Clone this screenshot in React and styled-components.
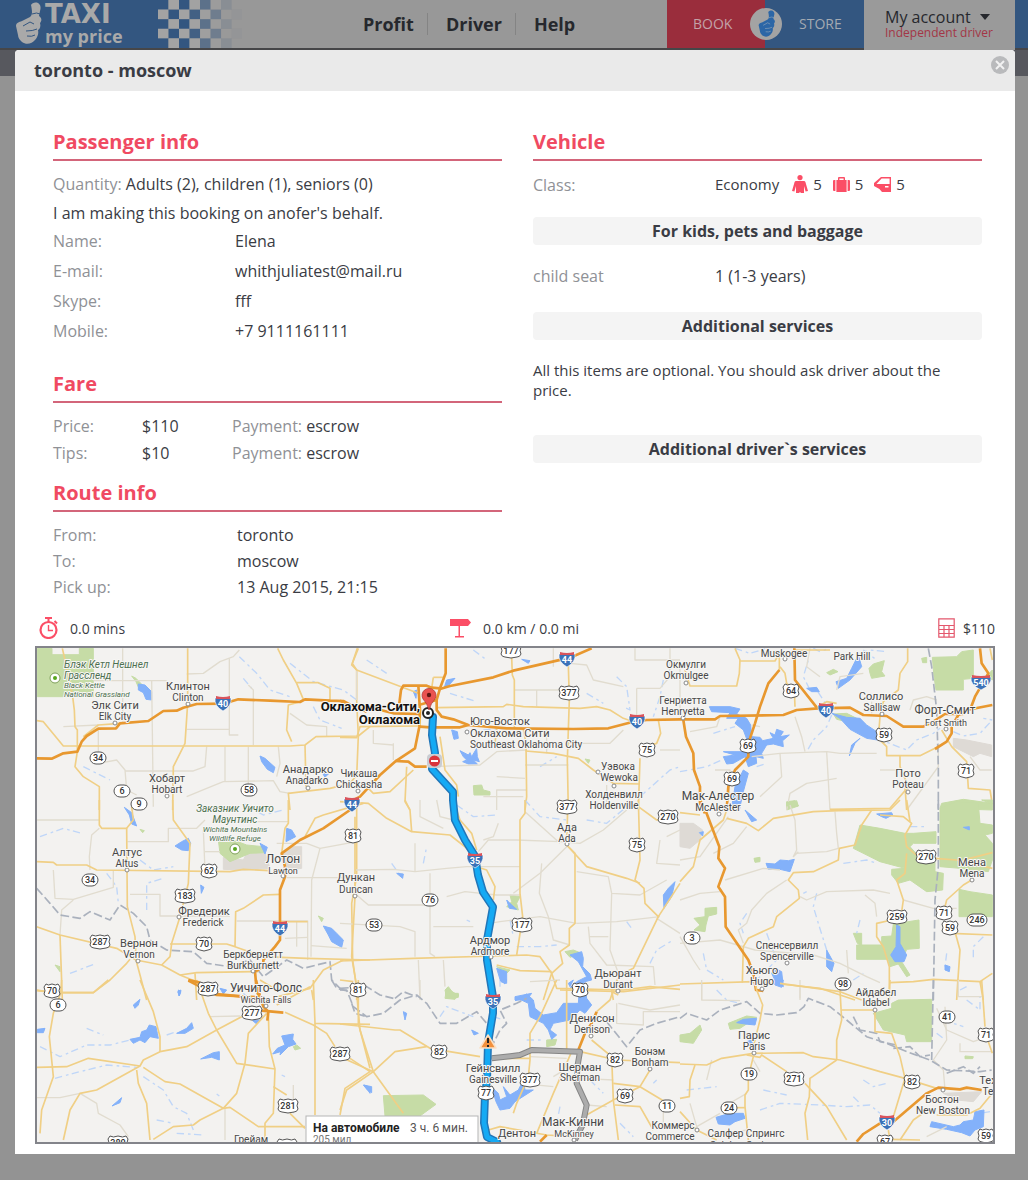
import React from "react";
import styled, { createGlobalStyle } from "styled-components";

const GlobalStyle = createGlobalStyle`
  *, *::before, *::after { box-sizing: border-box; }
  body {
    margin: 0;
    background: #939393;
    color: #3a3c44;
    font-family: "Open Sans", "Noto Sans", sans-serif;
    font-size: 16px;
  }
  h1, h2, h3, p, dl, dd, ul { margin: 0; padding: 0; }
`;

const Page = styled.div`
  min-height: 100vh;
  padding-bottom: 26px;
`;

/* ---------- site header ---------- */

const Header = styled.header`
  display: flex;
  height: 50px;
  background: #989898;
  border-bottom: 2px solid #464648;
`;

const Logo = styled.a`
  display: flex;
  flex: none;
  width: 158px;
  padding-left: 15px;
  gap: 3px;
  background: #335680;
  color: #a9a9a9;
  text-decoration: none;
`;

const LogoText = styled.span`
  display: flex;
  flex-direction: column;
`;

const LogoTop = styled.span`
  font-family: "DejaVu Sans", sans-serif;
  font-weight: 700;
  font-size: 26px;
  line-height: 28px;
`;

const LogoBottom = styled.span`
  font-weight: 700;
  font-size: 18px;
  line-height: 16px;
`;

const Checker = styled.svg`
  flex: none;
  width: 84px;
  height: 48px;
`;

const Nav = styled.nav`
  flex: 1;
  display: flex;
  align-items: center;
  padding-left: 103px;
`;

const NavLink = styled.a`
  padding: 0 13px 0 18px;
  border-right: ${(p) => (p.$last ? "none" : "1px solid #848484")};
  color: #26282d;
  font-size: 18px;
  font-weight: 700;
  line-height: 22px;
  text-decoration: none;
`;

const Switch = styled.div`
  position: relative;
  display: grid;
  grid-template-columns: 98px 99px;
  width: 197px;
`;

const SwitchLink = styled.a`
  padding: ${(p) => (p.$right ? "0 0 0 34px" : "0 0 0 26px")};
  background: ${(p) => (p.$right ? "#335680" : "#9a2d3c")};
  color: ${(p) => (p.$right ? "#a4aab2" : "#c3a2a8")};
  font-size: 14px;
  line-height: 48px;
  text-decoration: none;
`;

const SwitchBadge = styled.svg`
  position: absolute;
  left: 50%;
  top: 50%;
  width: 32px;
  height: 32px;
  margin: -16px;
`;

const Account = styled.button`
  display: flex;
  flex-direction: column;
  align-items: flex-start;
  width: 151px;
  height: 50px;
  padding: 7px 0 0 21px;
  border: 0;
  background: #9a9a9a;
  color: #26282d;
  font-family: inherit;
  text-align: left;
`;

const AccountName = styled.span`
  display: flex;
  align-items: center;
  gap: 9px;
  font-size: 16px;
  line-height: 20px;
`;

const AccountRole = styled.span`
  color: #a33646;
  font-size: 12px;
  line-height: 12px;
`;

const Caret = styled.span`
  border: 5px solid transparent;
  border-top: 6px solid #26282d;
  border-bottom: 0;
`;

const HeaderTail = styled.div`
  width: 13px;
  background: #335680;
`;

const Band = styled.div`
  height: 26px;
  background: #57585e;
`;

/* ---------- dialog ---------- */

const Dialog = styled.main`
  margin: -26px 13px 0 15px;
  padding-bottom: 10px;
  border-radius: 4px 4px 0 0;
  background: #fff;
`;

const DialogBar = styled.div`
  display: flex;
  justify-content: space-between;
  align-items: flex-start;
  height: 41px;
  padding: 6px 6px 0 19px;
  border-radius: 4px 4px 0 0;
  background: #eaeaea;
`;

const DialogTitle = styled.h1`
  font-size: 18px;
  line-height: 28px;
`;

const CloseButton = styled.button`
  display: block;
  width: 18px;
  height: 18px;
  padding: 0;
  border: 0;
  background: none;
`;

const Columns = styled.div`
  display: grid;
  grid-template-columns: 1fr 1fr;
  gap: 31px;
  padding: 38px 33px 12px 38px;
`;

const Section = styled.section`
  margin-bottom: ${(p) => p.$after || 0}px;
`;

const SectionTitle = styled.h2`
  padding-bottom: 4px;
  border-bottom: 2px solid #d3657a;
  color: #f04a62;
  font-size: 20px;
  line-height: 26px;
`;

const Rows = styled.dl`
  padding-top: ${(p) => p.$top || 0}px;
`;

const Row = styled.div`
  display: grid;
  grid-template-columns: ${(p) => p.$cols || "182px 1fr"};
  align-items: center;
  line-height: ${(p) => p.$height || 30}px;
`;

const Term = styled.dt`
  color: #8f9196;
`;

const InlineTerm = styled.span`
  color: #8f9196;
`;

const Quantity = styled.p`
  padding-top: 8px;
  line-height: 31px;
`;

const Note = styled.p`
  line-height: 26px;
`;

const Pill = styled.h3`
  margin: ${(p) => p.$top}px 0 ${(p) => p.$bottom || 0}px;
  border-radius: 4px;
  background: #f4f4f4;
  font-size: 16px;
  line-height: 28px;
  text-align: center;
`;

const Hint = styled.p`
  font-size: 15px;
  line-height: 20px;
`;

const Capacity = styled.dd`
  display: flex;
  align-items: center;
  font-size: 15px;
  line-height: 28px;
  padding-bottom: 2px;
`;

const CapacityItem = styled.span`
  display: flex;
  align-items: center;
  gap: 5px;
  margin-left: ${(p) => (p.$first ? 13 : 11)}px;
`;

const Stats = styled.div`
  display: grid;
  grid-template-columns: 43% auto 1fr;
  align-items: center;
  height: 34px;
  padding: 0 20px 2px 24px;
`;

const Stat = styled.div`
  display: flex;
  align-items: center;
  justify-self: ${(p) => (p.$end ? "end" : "start")};
  gap: ${(p) => (p.$end ? 8 : 12)}px;
  font-size: 14px;
`;

const MapFrame = styled.figure`
  margin: 0 20px;
  border: 2px solid #83848a;
  line-height: 0;
`;

const MapCanvas = styled.svg`
  display: block;
  width: 100%;
  height: auto;
  font-family: Roboto, sans-serif;
`;

/* ---------- icons ---------- */

const RED = "#fb4e66";

function Hand({ fill, line }) {
  return (
    <g>
      <path
        fill={fill}
        d="M16 3C17 1 20 0 23 1C26 3 26 6 25 9L24 14C27 16 27 19 25 21C26 24 25 27 23 28C24 32 22 36 20 38C17 42 11 43 7 40C5 38 3 36 3 33L1 24C1 21 4 20 7 19L15 15C18 13 17 8 16 3Z"
      />
      <path fill="none" stroke={line} strokeWidth="1" d="M8 24L15 20L19 22M11 29Q18 29 22 27M12 34Q17 35 20 33M17 12Q22 10 25 12" />
    </g>
  );
}

function ThumbIcon() {
  return (
    <svg width="27" height="46" viewBox="0 -2 27 46" aria-hidden="true">
      <Hand fill="#a9a9a9" line="#335680" />
    </svg>
  );
}

function PersonIcon() {
  return (
    <svg width="16" height="18" viewBox="0 0 16 18" fill={RED} aria-hidden="true">
      <circle cx="8" cy="2.6" r="2.6" />
      <path d="M4 6H12Q13 6 13.4 7L16 16L13.6 16.6L12 11V18H8.5V17H7.5V18H4V11L2.4 16.6L0 16L2.6 7Q3 6 4 6Z" />
    </svg>
  );
}

function CaseIcon() {
  return (
    <svg width="17" height="15" viewBox="0 0 17 15" fill={RED} aria-hidden="true">
      <path d="M1 3H2.4V14H1Q0 14 0 13V4Q0 3 1 3ZM3.4 3H5V1Q5 0 6 0H11Q12 0 12 1V3H13.6V15H3.4ZM6.4 3H10.6V1.4H6.4ZM14.6 3H16Q17 3 17 4V13Q17 14 16 14H14.6Z" />
    </svg>
  );
}

function DoorIcon() {
  return (
    <svg width="17" height="15" viewBox="0 0 17 15" aria-hidden="true">
      <path fill={RED} d="M0 6L7 0H17V15H8Q5 11 0 9ZM2.5 7H15.6V1.4H7.6ZM11 9V10.4H14.5V9Z" fillRule="evenodd" />
    </svg>
  );
}

function TimerIcon() {
  return (
    <svg width="19" height="22" viewBox="0 0 19 22" fill="none" stroke={RED} aria-hidden="true">
      <circle cx="9.5" cy="13" r="8" strokeWidth="2.2" />
      <path strokeWidth="2" d="M6 1H13M9.5 1V5M15.5 4L18 6.5" />
      <path strokeWidth="1.4" d="M9.5 8V13.5H14" />
    </svg>
  );
}

function SignIcon() {
  return (
    <svg width="21" height="20" viewBox="0 0 21 20" fill={RED} aria-hidden="true">
      <path d="M0 1H18L21 4.500L18 8H10V18H14V19.500H5V18H8.500V8H0Z" />
    </svg>
  );
}

function CalcIcon() {
  return (
    <svg width="17" height="20" viewBox="0 0 17 20" fill="none" stroke="#e4576c" aria-hidden="true">
      <path d="M.8 .8H16.2V19.2H.8ZM.8 7.5H16.2M.8 11.5H16.2M.8 15.5H16.2M6 7.5V19M11 7.5V19" strokeWidth="1.2" />
    </svg>
  );
}

/* ---------- map data: tiles are drawn at three units per pixel ---------- */

const TILES = [
  {
    x: 30, y: 610,
    green: ["22,115 66,115 66,134 148,134 148,115 190,115 190,260 22,260", "305,198 318,205 340,228 328,238 318,215"],
    water: ["325,222 345,225 365,245 365,270 348,268 340,248 325,240", "690,438 705,445 735,472 730,488 712,478 695,455", "875,485 895,492 885,502"],
    major: ["20,445 65,446 100,430 142,425 155,395 170,378 205,356 258,355 270,340 355,333 400,303 440,302 460,293 500,282 580,281 625,268 720,272 810,276 825,268 900,272 940,273 955,281 1010,305"],
    minor: ["97,115 105,150 128,260 133,300 135,350 142,360 142,425", "20,332 40,335 100,408 780,408 825,405 858,380 985,378 1020,350", "142,425 135,470 160,500 208,530 208,600", "473,115 473,280 465,400 430,470 428,600", "743,115 760,150 800,220 820,268 808,276 775,285 770,360 785,395", "825,405 828,530", "800,218 865,218 900,235 900,272", "985,115 965,165 980,180 980,270 985,378 980,500", "780,600 775,550 900,535 960,520 985,490", "160,380 205,345 270,340"],
    faint: ["278,115 278,335", "470,192 520,190 570,155 610,140 628,120", "365,212 370,590", "598,145 598,375 625,375", "190,212 410,212", "655,225 670,240 670,405", "205,360 205,460 260,450 285,480 290,540 320,555", "285,483 490,483 525,470 530,410", "470,560 530,535 580,515 730,512 750,545 780,550", "585,410 585,515", "740,500 750,460 745,410", "780,310 830,345 890,350 890,380", "655,410 655,540", "470,358 598,358", "100,350 205,345"],
    creek: ["628,140 680,190 720,240 780,260", "780,160 850,215 940,240 980,270", "850,290 870,330 935,355", "160,470 240,510", "640,205 665,235"],
  },
  {
    x: 340, y: 610,
    green: ["400,527 425,525 430,540 450,545 450,555 402,555", "735,447 750,450 745,460"],
    water: ["360,422 385,435 390,428 395,440 410,415 412,440 418,455 400,450 412,462 385,462 368,455 380,450 370,440", "335,360 352,365 355,385 342,388", "220,245 230,240 228,265", "545,148 570,152 565,160", "320,210 345,205 330,222 312,235"],
    major: ["317,115 317,190 300,235 290,270 290,300 305,320 340,328 385,345 500,355 700,357 805,355 880,335 920,330 1020,328", "755,115 690,143 520,182 460,202 330,228 300,237", "178,280 183,240 190,227 260,227 275,233 300,235", "235,227 240,300 238,350 225,415 165,455 120,495 60,560 20,580", "0,272 40,290 75,288 160,310 240,312", "165,453 205,455 225,470 260,470", "240,350 270,352 360,352 385,345", "236,285 290,270"],
    minor: ["52,115 37,160 50,180 235,250", "515,140 517,195 523,210 523,355 550,357 558,400 560,560 555,600", "290,293 490,290 500,283 550,290 720,295 770,290 810,300 850,325 880,335", "685,165 688,270 682,450 685,600", "557,423 640,430 715,445 760,480 820,520 900,522", "900,445 895,600", "955,330 962,370 950,400 915,410", "0,382 50,383 60,350 240,348", "200,470 195,575 210,600", "300,380 315,480 350,525 355,560", "80,530 100,550 150,545 220,480", "280,202 310,202", "275,235 280,202", "470,357 465,400"],
    faint: ["523,240 680,240", "590,240 590,290", "270,470 420,465 470,425 560,420", "640,170 640,115", "620,360 620,430", "685,400 810,400 850,360", "885,115 885,150 1020,150", "890,235 890,325", "890,235 960,235 990,200 990,115", "470,500 555,505", "555,465 685,465", "800,525 800,600", "430,560 550,560", "50,180 50,270", "160,400 160,450", "100,360 100,400 160,405", "690,160 740,165 760,210 850,230", "560,540 470,540 470,600", "960,420 1020,420"],
    creek: ["80,150 140,190", "330,250 410,275", "830,200 860,230 870,300 850,290", "970,210 960,260 940,320", "430,360 500,355", "900,560 990,480 1020,470", "740,250 790,280", "600,470 650,440", "400,120 440,150"],
  },
  {
    x: 680, y: 610,
    green: ["757,142 830,140 845,125 880,120 880,205 850,208 850,240 768,240 762,200", "567,175 580,162 613,152 605,185 615,198 575,205 570,190", "440,188 460,178 474,185 450,195", "725,145 740,142 740,158 728,158", "780,595 785,580 850,568 937,580 937,600", "460,312 500,310 530,325 500,335 470,328", "320,575 345,572 355,588 320,600", "918,200 937,180 937,210"],
    water: ["455,310 500,322 540,325 560,345 590,365 592,390 560,385 510,358 480,325", "540,385 525,400 508,438 515,405", "88,290 150,290 180,297 170,312 200,325 212,345 215,380 240,382 248,392 280,385 270,368 285,375 290,358 310,365 300,380 328,375 308,392 310,410 280,402 260,405 245,430 250,445 228,440 230,460 205,470 195,440 160,460 140,462 130,440 165,435 130,425 165,425 195,425 205,400 190,360 165,340 175,325 140,325 150,308 95,305", "468,215 500,205 515,175 535,135 545,170 510,210 475,235", "155,590 165,530 190,480 205,490 190,545 178,600", "380,235 410,232 418,245 395,245"],
    patch: ["820,385 860,390 935,405 935,440 900,430 880,440 820,410"],
    major: ["343,115 345,210 410,292", "0,328 105,328 120,318 310,315 350,300 415,295 510,293 550,315 620,318 670,350 730,350 760,335 795,312 850,312", "937,285 860,300 835,315 815,350 815,370 800,395 765,417", "900,115 905,160 925,190 885,260 870,300", "298,180 265,220 240,290 225,340 205,400 205,440 165,480 145,530 140,600", "10,330 18,380 40,430 42,480 60,530 60,580 75,610"],
    minor: ["165,115 180,150 178,190 170,228 30,228 15,180", "178,153 285,153 298,130 298,185", "300,170 315,190 320,220 343,240 345,290", "345,120 450,120", "683,115 683,155 660,190 655,240 610,275 600,320 595,385 620,410 620,437 720,437 765,415", "660,437 660,470 685,530 630,595 450,598", "675,530 680,600", "785,360 815,410 860,455 865,535 930,540 935,570", "410,292 440,275 470,280", "930,115 937,150"],
    faint: ["345,320 365,380 375,425", "215,440 300,430 440,425 480,430 590,430", "440,425 450,600", "105,480 150,480 145,570", "300,430 305,500 240,560", "0,175 0,300", "120,320 110,350 30,365", "240,350 215,345", "420,200 380,170 390,115", "470,240 480,200 550,190", "575,275 575,310", "690,300 700,270 740,260 770,270", "600,480 650,480", "470,505 380,520 330,550 320,600", "870,440 900,480 935,480", "775,400 775,470 680,600"],
    creek: ["165,115 210,130 260,115", "400,115 420,125 440,118", "360,130 385,150 370,200 390,240 410,240 430,270 455,310", "590,385 680,420 710,390 760,370 780,355", "820,365 850,378 900,370 937,330 910,325", "455,315 440,350 400,390 380,425", "550,120 590,150", "230,470 260,460", "0,485 80,470 125,450", "100,370 165,350", "540,130 570,120 620,125"],
    border: ["745,115 755,170 770,300 775,470 775,600"],
  },
  {
    x: 30, y: 800,
    green: ["565,120 615,122 650,135 700,140 705,158 660,160 600,185 570,160", "330,88 343,92 338,98", "865,348 880,355 875,365", "75,495 90,500 90,515"],
    patch: ["580,172 640,180 650,160 705,158 720,205 640,210 580,208", "755,165 785,140 815,140 815,205 770,210"],
    water: ["435,138 455,125 475,115 482,130 475,152 455,150", "770,85 785,90 797,110 768,125", "283,22 305,38 320,78 305,72 298,45", "880,378 905,385 920,400 940,420 935,442 905,425 895,405", "690,130 712,142 705,162", "512,255 522,262 514,280", "445,570 453,575 447,588"],
    major: ["960,30 880,85 810,120 755,160 765,200 765,230 750,270 750,420 735,440 700,480 700,500 675,515 680,570 690,600", "475,542 560,585 690,592"],
    minor: ["208,0 208,75 215,85 290,85 292,320 315,410 318,480 350,600", "428,0 430,60 480,130 475,250 450,350 425,430 420,470 395,495 318,480 260,445 90,405 20,380", "20,185 70,187 80,195 170,195 200,210 600,215 640,208 720,212", "775,0 775,70 765,85 755,160", "20,572 80,578 190,578 240,540 290,490 300,478", "90,405 97,600", "420,432 590,432 615,440 700,470 830,475 1020,480", "615,440 617,335 640,325 700,285 750,283", "395,495 450,525 500,545", "450,525 500,518 670,515 685,515", "495,520 500,600", "750,365 833,365", "980,0 980,230 965,310 968,480 985,600", "940,480 880,510 840,565 745,590", "690,540 740,570", "845,570 850,600", "825,110 855,55 880,45 1000,10", "290,85 310,60 305,20"],
    faint: ["20,60 208,60", "70,210 75,295 130,298 250,262 250,212", "180,210 178,170 185,105 208,85", "292,125 415,125 415,85 500,85 525,60", "300,283 390,283 390,348 600,348", "620,363 833,363 833,480", "520,90 525,210", "770,233 980,233", "740,130 830,130 870,145 980,125", "870,145 845,240 843,470", "950,445 843,437", "765,415 833,412", "90,405 95,330 130,300", "525,155 570,155", "650,65 775,65", "800,365 800,440"],
    creek: ["30,110 100,85 155,100", "230,220 260,260 265,310", "330,180 370,210 430,200", "350,330 350,250 400,235", "120,520 200,490", "640,10 700,45 760,30"],
    border: ["20,265 60,310 90,345 150,355 180,335 240,360 270,315 310,340 350,380 360,420 410,450 490,455 530,490 600,500 660,480 700,530 770,480 820,505 900,485 905,540 935,570"],
  },
  {
    x: 340, y: 800,
    green: ["510,285 540,290 530,310 535,330 500,320 515,305", "315,570 325,560 340,580 355,580 355,592 320,595", "675,455 700,450 725,460 690,472", "470,500 510,510 500,520"],
    water: ["500,300 515,315 530,328 508,325", "470,505 500,515 500,550 482,545", "690,465 725,455 730,475 728,500 750,522 755,540 735,545 720,560 690,565 710,545 740,530 715,485", "970,285 985,265 1005,245 995,290 972,325", "170,220 190,222 188,235", "525,590 575,580 560,600 525,600"],
    minor: ["0,5 85,10 140,55 215,95 330,105 400,160", "195,0 210,30 215,95", "555,0 555,40 540,60 540,280 548,350 530,465", "0,483 220,475 560,465 600,470 635,520 650,565 850,570 930,560 1020,568", "683,30 680,135 705,160 705,370 688,385 688,435 660,455 668,490 635,520 610,600", "895,0 900,180 885,240 912,265 915,310 955,350 1020,250", "955,350 880,505 840,525 815,570 820,600", "470,495 540,512 635,515", "45,50 45,290 35,470 50,560 50,600", "410,200 440,210 465,260 460,300", "895,20 950,60 985,55", "680,135 740,200 860,235 900,250", "340,0 360,60 395,100 410,150"],
    faint: ["45,210 160,208 225,215 320,205 380,200 540,200", "225,130 225,215", "50,285 85,315 270,315", "270,220 270,460 285,470", "320,290 375,275 470,285 540,285", "415,155 445,120 530,120 660,125 720,130 790,90 860,30", "555,35 660,130", "680,140 600,220 520,280", "605,190 598,280 625,350 640,420 690,435", "710,215 805,230 815,280 900,285 980,240", "815,280 810,450 835,520", "450,370 480,365 600,350 710,370", "710,370 830,365 960,350", "0,370 180,380 225,395 225,470", "280,380 400,380", "745,380 750,430 800,495 940,500 945,555", "310,480 315,560", "950,355 1020,400", "475,70 460,110 430,120", "240,0 240,50 310,85", "290,0 300,50 340,60", "750,410 805,410", "980,110 1020,90", "960,120 950,190 1020,195", "235,480 240,600"],
    creek: ["350,15 400,50 470,45", "555,0 600,50 680,60", "740,60 800,70 860,20 900,10", "155,190 180,225", "250,190 260,140", "530,440 600,440 650,435", "510,360 520,410", "380,360 390,365", "860,365 875,385", "930,490 950,450 1000,420"],
    border: ["0,565 80,560 120,585 160,595", "165,595 190,575 230,590"],
  },
  {
    x: 680, y: 800,
    green: ["780,25 830,5 895,10 900,70 937,75 937,100 915,105 937,130 937,180 925,215 840,205 780,200", "540,75 600,85 675,100 700,100 768,95 768,130 700,130 690,140 708,160 765,185 765,215 790,220 788,270 740,275 690,240 655,250 635,225 635,208 675,205 600,185 520,145", "837,268 870,275 937,285 937,350 837,350", "605,410 635,408 640,372 717,360 718,445 680,448 665,485 690,525 680,530 655,492 630,500 625,478 530,478 530,435 605,435", "75,325 110,322 110,342 85,348 78,375 75,395 42,390 60,375 42,355 75,350", "520,400 545,400 545,438 532,430", "222,175 240,172 240,185 225,187", "320,8 350,2 355,18 320,18", "905,0 937,0 937,12"],
    patch: ["0,70 40,70 68,90 60,120 30,145 0,140"],
    water: ["258,190 285,192 300,180 325,182 343,178 330,215 300,208 265,208", "650,375 660,380 660,430 680,465 672,485 645,485 632,465 648,440", "285,505 305,515 310,560 288,548 275,520", "440,450 462,490 455,515 440,500", "590,42 635,38 638,45 618,55 605,50", "795,495 810,500 808,515 795,510", "850,82 868,80 868,90", "195,30 230,60 215,65", "58,98 70,95 68,108"],
    major: ["60,0 78,35 118,140 115,175 135,205 115,260 135,290 137,380 205,480 220,520 228,570 250,573"],
    minor: ["0,38 60,45", "140,30 130,60 60,120 40,200 0,245", "140,55 200,70 235,92 280,55 400,35 475,32 630,30 660,0", "575,30 545,75 525,135 478,145 475,180 400,215 340,218 325,240 355,270 358,295 290,350 280,380 205,415 190,440 187,548", "600,45 670,50 695,70 675,105 680,140 708,165", "680,0 690,65", "680,160 675,220 650,240 670,300 665,335", "765,175 830,180 937,205", "875,240 850,255 800,300 795,320", "635,360 590,370 590,410 610,440 628,500 628,600", "815,400 937,405", "825,395 840,450 833,550 830,600", "0,552 220,545 330,555 420,565 525,600", "628,548 700,545 760,538 900,545 937,520", "900,545 910,600", "850,180 937,158"],
    faint: ["0,430 120,420 225,450 400,465", "0,300 60,280 120,275", "345,60 350,150 340,170 355,155", "345,160 440,155 475,145", "320,240 260,280 215,330 200,370 175,390 190,430", "360,290 380,300 440,275 580,270 630,280", "555,285 585,310 590,350", "670,300 760,325 830,325", "400,465 480,490 560,530 600,548", "500,450 505,520", "465,35 470,100 475,145", "65,550 65,600", "360,560 360,600", "145,50 60,170 0,180", "135,240 250,205 300,210", "0,410 40,480 60,510", "330,15 345,60", "100,160 160,130 200,80"],
    creek: ["200,340 180,370 190,400", "260,400 290,480 230,540", "410,280 400,320 415,370 440,450", "490,190 560,180 590,190", "70,460 80,510 130,540", "540,360 530,400", "690,80 740,80", "910,410 880,440 880,480", "840,570 860,560", "800,460 795,500", "520,540 550,520", "370,280 380,275", "205,0 170,-10"],
    border: ["775,0 775,200 765,300 760,600"],
  },
  {
    x: 30, y: 980,
    green: ["790,200 800,195 812,205 795,210"],
    water: ["300,178 330,172 335,155 350,150 358,135 378,140 382,160 385,175 360,170 345,188 330,180 310,190", "440,160 470,145 485,128 490,145 465,160", "512,237 550,218 568,215 568,240 545,232", "755,168 790,162 788,178 798,192 775,200 750,225 752,215 728,222 742,205 765,195", "246,378 275,353 270,368", "310,75 330,58 325,75 315,85", "443,35 453,30 448,48", "22,148 45,145 40,158 22,158", "1003,315 1020,322 1020,340", "570,25 590,30 580,42", "668,122 690,120 680,132"],
    major: ["475,0 510,8", "560,42 640,50", "678,0 690,50 700,80 715,95 712,122", "695,92 760,98"],
    minor: ["20,30 50,35", "60,38 190,38 235,0", "95,0 92,40 70,100 58,170 70,290 35,390 30,460", "330,0 370,95 390,170 390,215", "20,262 110,260 175,235 330,258 340,240 390,215 470,200 560,150 635,110", "330,258 200,330 150,340 120,390 100,480", "320,270 325,310 350,370 360,480", "340,262 405,305 450,312 580,385 600,382 685,440 825,440", "500,0 535,100 560,150 620,250 735,267", "370,478 430,440 490,435 510,420 580,385 620,340 645,250 655,160 710,100", "715,100 718,200 735,267 730,400 705,430 705,480", "730,320 770,345", "780,400 825,445", "850,0 855,130 1020,133", "855,130 855,405", "765,97 850,135 890,160 915,200", "960,235 1020,275 945,325 930,405", "740,75 840,20", "985,0 985,130 1020,265"],
    faint: ["20,353 90,353 150,340 200,370 205,400 270,435 295,470", "540,110 630,108", "585,385 585,480", "790,315 790,400"],
    creek: ["30,200 90,230 170,195 240,195 300,180", "75,295 130,280 230,255 320,262", "340,290 400,330 430,380 470,400 490,450", "170,145 220,165", "410,165 440,155", "640,40 660,60", "755,285 765,290", "560,342 568,348", "440,460 520,465", "380,420 430,430"],
    border: ["905,0 920,25 960,35", "965,70 975,100 1010,110"],
  },
  {
    x: 340, y: 980,
    green: ["130,347 250,345 288,373 240,408 135,408", "320,25 345,40 357,45 345,58 315,55", "620,180 650,178 645,195 620,200"],
    water: ["525,62 560,42 580,60 585,85 610,105 650,98 670,70 715,70 718,30 735,25 740,55 755,75 735,100 720,90 690,120 640,130 630,150 650,165 635,178 625,150 610,130 570,110 565,70 540,58", "455,322 475,340 480,360 500,350 490,320 510,345 535,330 550,300 555,330 580,330 525,365 510,385 480,390 468,365", "190,95 200,100 195,120", "395,150 415,160 402,165", "70,315 95,320 95,338 82,330", "480,0 500,0 495,12", "685,10 700,0 690,20"],
    major: ["770,95 755,130 735,160 715,210", "620,465 600,485"],
    minor: ["0,132 165,150 180,150 270,205 420,230", "50,40 60,150 100,275 190,400", "0,230 100,275 165,215 260,200", "0,390 20,330 100,275", "650,0 600,110 570,160 570,240 565,290 530,370 520,400", "680,0 680,210", "0,0 40,5", "720,215 830,240 1020,248", "815,35 835,45", "820,30 810,60 770,95", "755,180 815,230 820,360 835,480", "695,215 640,340 590,460", "730,410 820,360 900,320 930,270", "820,310 900,320 1000,380", "825,375 900,380 940,450", "445,450 480,440 620,465 700,470", "660,30 850,35 1020,15", "570,235 440,235"],
    faint: ["240,0 240,55", "570,230 680,235", "830,70 830,130 910,135 910,95 1020,95", "640,290 690,260", "740,375 800,380", "720,295 820,300", "640,320 540,310", "0,420 0,480", "570,5 660,0", "970,380 970,440", "835,70 930,90 1020,75"],
    creek: ["480,0 480,20", "300,110 320,80 400,110", "460,110 490,120", "840,430 880,470", "660,380 650,430", "750,300 790,340", "560,180 610,180", "940,310 950,300"],
    border: ["0,30 20,30 40,80 80,110 130,100 180,60 230,45 260,70 300,130 350,130 410,95 440,130 460,190 480,150 500,130 480,90 530,70 560,55", "800,125 860,200 900,150 950,130 1020,110"],
    detour: ["455,235 540,225 575,210 720,215 712,260 710,310 740,375 728,435 705,480"],
  },
  {
    x: 680, y: 980,
    green: ["580,100 635,85 635,70 655,60 755,58 755,185 680,185 675,165 610,150", "145,130 170,120 200,108 230,112 180,145 150,148", "0,165 30,160 60,135 65,150 40,190 0,185", "855,228 880,230 878,236 855,236"],
    patch: ["790,340 905,335 880,365 830,360"],
    water: ["170,128 190,118 230,115 225,135 195,132", "108,412 150,400 190,400 195,415 165,425 150,435 115,432", "850,425 880,420 885,395 912,390 910,440 885,450 870,468 845,458 800,448 750,440 755,425 820,440 840,435", "280,0 310,0 305,22 285,15", "200,185 215,180 218,195"],
    major: ["530,485 550,462 600,430 640,425 740,340 775,323 840,328 860,323 905,330"],
    minor: ["0,252 80,255 125,235 220,220 370,218 400,230 480,240 600,275 675,295 770,325", "220,230 205,290 205,330 195,345 195,380 205,480", "200,225 240,232 245,225 320,275", "375,310 440,380 500,480", "470,240 390,295 388,350 375,400 383,480", "470,240 470,180 485,120 480,30", "225,0 230,30 248,75 240,120 220,200", "300,10 480,35 545,60", "485,90 580,90", "585,95 585,155 635,160 660,230 675,295 640,410", "170,383 195,383", "45,255 30,300 28,350 0,355", "905,0 915,140", "925,185 937,220", "660,480 700,420 750,385", "625,450 630,480", "0,395 50,450 110,480", "937,340 900,385 860,405 770,405", "630,0 628,40", "635,478 720,480"],
    faint: ["65,0 65,60 180,62", "360,0 360,55", "80,300 95,240", "30,370 50,440 120,400", "140,375 200,340", "795,80 800,180 760,240 790,270 795,330", "835,0 835,50 910,50", "770,85 800,150 880,185 937,165", "240,275 220,240", "120,460 205,450", "840,190 840,215 937,215", "800,440 740,470"],
    creek: ["240,390 300,370 420,375 500,380 570,375 600,400", "550,300 580,320 620,310", "20,330 110,320", "250,330 320,345", "520,350 540,370", "110,30 140,60 180,70", "860,60 900,90 900,50", "930,395 900,400", "770,160 790,175", "790,120 850,140"],
    border: ["0,115 20,100 80,120 120,90 200,65 240,100 290,105 350,98 372,80 385,55 450,80 500,120 560,170 620,190 680,215 750,240 800,270 900,275 935,270", "520,110 540,150 590,160 600,185 650,195", "640,205 690,200 720,230 750,225", "800,280 850,260 880,280 900,260", "760,0 755,240"],
  },
];

// x, y, text, size
const PLACES = [
  [188, 690, "Клинтон", 11], [188, 701, "Clinton", 10], [115, 709, "Элк Сити", 11], [115, 720, "Elk City", 10],
  [167, 782, "Хобарт", 11], [167, 793, "Hobart", 10], [308, 773, "Анадарко", 11], [307, 784, "Anadarko", 10],
  [359, 777, "Чикаша", 10], [359, 788, "Chickasha", 10], [686, 668, "Окмулги", 10], [686, 679, "Okmulgee", 10],
  [784, 657, "Muskogee", 10], [852, 660, "Park Hill", 10], [683, 704, "Генриетта", 10], [683, 715, "Henryetta", 10],
  [881, 700, "Соллисо", 11], [882, 711, "Sallisaw", 10], [945, 714, "Форт-Смит", 12], [946, 726, "Fort Smith", 9],
  [618, 770, "Уэвока", 10], [619, 781, "Wewoka", 10], [614, 798, "Холденвилл", 10], [614, 809, "Holdenville", 10],
  [718, 800, "Мак-Алестер", 12], [718, 811, "McAlester", 10], [908, 777, "Пото", 11], [908, 788, "Poteau", 10],
  [127, 856, "Алтус", 11], [127, 867, "Altus", 10], [283, 863, "Лотон", 12], [283, 874, "Lawton", 9],
  [204, 915, "Фредерик", 11], [203, 926, "Frederick", 10], [139, 947, "Вернон", 11], [139, 958, "Vernon", 10],
  [253, 958, "Беркбернетт", 10], [253, 969, "Burkburnett", 10], [266, 992, "Уичито-Фолс", 12], [266, 1003, "Wichita Falls", 9],
  [356, 881, "Дункан", 11], [356, 893, "Duncan", 10], [567, 831, "Ада", 11], [567, 842, "Ada", 10],
  [490, 944, "Ардмор", 11], [490, 955, "Ardmore", 10], [618, 977, "Дьюрант", 11], [618, 988, "Durant", 10],
  [972, 866, "Мена", 11], [972, 877, "Mena", 10], [787, 949, "Спенсервилл", 10], [787, 960, "Spencerville", 10],
  [762, 974, "Хьюго", 11], [762, 985, "Hugo", 10], [876, 996, "Айдабел", 10], [876, 1006, "Idabel", 10],
  [592, 1022, "Денисон", 11], [592, 1033, "Denison", 10], [493, 1072, "Гейнсвилл", 11], [493, 1083, "Gainesville", 10],
  [580, 1071, "Шерман", 11], [580, 1081, "Sherman", 10], [650, 1055, "Бонэм", 10], [650, 1066, "Bonham", 10],
  [573, 1126, "Мак-Кинни", 12], [574, 1137, "McKinney", 9], [517, 1137, "Дентон", 11], [754, 1039, "Парис", 11],
  [754, 1050, "Paris", 10], [673, 1129, "Коммерс", 10], [670, 1140, "Commerce", 10], [746, 1137, "Салфер Спрингс", 10],
  [942, 1103, "Бостон", 10], [943, 1114, "New Boston", 10], [988, 1084, "Тех", 11], [988, 1095, "Te", 10], [251, 1143, "Грейам", 10],
  [745, 1149, "Sulphur Springs", 10],
];

const LEFT_PLACES = [
  [470, 725, "Юго-Восток", 11], [470, 737, "Оклахома Сити", 11], [470, 748, "Southeast Oklahoma City", 10],
];

const PARK_LABELS = [
  [64, 668, "Блэк Кетл Нешнел", 10, "start"], [64, 679, "Грассленд", 10, "start"],
  [64, 688, "Black Kettle", 8, "start"], [64, 697, "National Grassland", 8, "start"],
  [235, 812, "Заказник Уичито", 10, "middle"], [235, 823, "Маунтинс", 10, "middle"],
  [235, 832, "Wichita Mountains", 8, "middle"], [235, 841, "Wildlife Refuge", 8, "middle"],
];

// x, y, number, kind: u = US route, s = state route, i = interstate
const SHIELDS = [
  [98, 758, "34", "s"], [122, 791, "6", "s"], [139, 804, "9", "s"], [249, 790, "58", "s"], [223, 703, "40", "i"], [352, 804, "44", "i"],
  [511, 651, "177", "u"], [567, 659, "44", "i"], [569, 693, "377", "u"], [637, 721, "40", "i"], [647, 750, "75", "u"], [567, 807, "377", "u"],
  [791, 691, "64", "u"], [826, 710, "40", "i"], [981, 682, "540", "i"], [884, 735, "59", "u"], [748, 746, "69", "u"], [732, 779, "69", "u"], [966, 771, "71", "u"],
  [353, 836, "81", "u"], [209, 871, "62", "u"], [90, 880, "34", "s"], [185, 896, "183", "u"], [280, 928, "44", "i"], [100, 942, "287", "u"], [204, 944, "70", "u"],
  [52, 991, "70", "u"], [58, 1005, "6", "s"], [208, 989, "287", "u"], [252, 1013, "277", "u"], [358, 990, "81", "u"], [430, 900, "76", "s"], [374, 925, "53", "s"],
  [475, 860, "35", "i"], [522, 925, "177", "u"], [668, 817, "270", "u"], [637, 845, "75", "u"], [692, 938, "3", "s"], [580, 990, "70", "u"], [493, 1001, "35", "i"],
  [926, 857, "270", "u"], [897, 917, "259", "u"], [944, 913, "71", "u"], [977, 920, "246", "s"], [950, 928, "59", "u"], [843, 984, "98", "s"], [947, 1017, "41", "s"], [986, 1035, "71", "u"],
  [340, 1054, "287", "u"], [439, 1052, "82", "u"], [530, 1080, "377", "u"], [486, 1093, "77", "u"], [615, 1060, "82", "u"], [625, 1096, "69", "u"], [667, 1106, "11", "s"],
  [749, 1074, "19", "s"], [794, 1079, "271", "u"], [729, 1108, "24", "s"], [912, 1082, "82", "u"], [887, 1122, "30", "i"], [986, 1136, "59", "u"], [288, 1106, "281", "u"],
  [118, 1143, "380", "u"], [885, 1142, "67", "u"], [287, 1146, "281", "u"],
];

const TOWNS = [
  [188, 704], [115, 723], [167, 796], [308, 788], [358, 791], [686, 683], [785, 659], [882, 714], [946, 729], [598, 772], [614, 786],
  [719, 814], [908, 792], [127, 870], [283, 876], [179, 917], [138, 961], [253, 971], [266, 1006], [355, 896], [567, 844], [491, 957],
  [618, 991], [972, 880], [787, 963], [762, 989], [875, 1010], [591, 1036], [650, 1069], [574, 1140], [754, 1053], [943, 1090], [467, 732], [683, 718], [697, 1130],
];

const ROUTE = "433,717 432,735 435,753 434,763 432,769 453,792 453,800 455,820 465,840 475,856 478,875 483,892 493,907 487,940 487,960 493,997 493,1013 488,1043 487,1080 485,1095 484,1123 487,1137 497,1142";

function Lines({ items, ...rest }) {
  return (
    <g fill="none" strokeLinejoin="round" {...rest}>
      {(items || []).map((points) => <polyline key={points} points={points} />)}
    </g>
  );
}

function Areas({ items, fill }) {
  return <g fill={fill} stroke={fill} strokeWidth="3" strokeLinejoin="round">{(items || []).map((points) => <polygon key={points} points={points} />)}</g>;
}

function Tile({ tile }) {
  return (
    <g transform={`translate(${tile.x} ${tile.y}) scale(0.33333)`}>
      <Areas items={tile.patch} fill="#dedad5" />
      <Areas items={tile.green} fill="#c6dca6" />
      <Lines items={tile.creek} stroke="#bfd6f8" strokeWidth="4" strokeDasharray="22 12 8 10" />
      <Areas items={tile.water} fill="#83b1fa" />
      <Lines items={tile.faint} stroke="#e1dccf" strokeWidth="4" />
      <Lines items={tile.border} stroke="#aab1bd" strokeWidth="5" strokeDasharray="26 10" />
      <Lines items={tile.minor} stroke="#f0cf85" strokeWidth="5" />
      <Lines items={tile.major} stroke="#e8982f" strokeWidth="8" />
      <Lines items={tile.detour} stroke="#858585" strokeWidth="18" />
      <Lines items={tile.detour} stroke="#acacac" strokeWidth="12" />
    </g>
  );
}

function Shield({ x, y, label, kind }) {
  if (kind === "i") {
    const half = label.length > 2 ? 10 : 8;
    return (
      <g transform={`translate(${x} ${y})`}>
        <path d={`M${-half} -5Q${-half - 1} 3 0 8Q${half + 1} 3 ${half} -5Z`} fill="#3c72b8" stroke="#fff" strokeWidth=".6" />
        <path d={`M${-half + 1} -7Q0 -5 ${half - 1} -7V-4H${-half + 1}Z`} fill="#d9545c" />
        <text y="4" fontSize="9" fontWeight="700" fill="#fff" textAnchor="middle">{label}</text>
      </g>
    );
  }
  const half = label.length > 2 ? 10 : 8;
  return (
    <g transform={`translate(${x} ${y})`}>
      {kind === "s" ? (
        <rect x={-half} y="-6" width={half * 2} height="12" rx="6" fill="#fff" stroke="#555" />
      ) : (
        <path
          d={`M${-half + 2} -7Q${-half / 2} -5 0 -7Q${half / 2} -5 ${half - 2} -7L${half} -4Q${half - 2} 0 ${half} 3Q${half - 1} 6 ${half - 4} 6L0 7L${-half + 4} 6Q${-half + 1} 6 ${-half} 3Q${-half + 2} 0 ${-half} -4Z`}
          fill="#fff" stroke="#555"
        />
      )}
      <text y="3" fontSize="9" fontWeight="500" fill="#333" textAnchor="middle">{label}</text>
    </g>
  );
}

function RouteMap() {
  return (
    <MapCanvas viewBox="37 648 956 494" role="img" aria-label="Route map">
      <rect x="37" y="648" width="956" height="494" fill="#f3f2f0" />
      {TILES.map((tile) => <Tile key={`${tile.x}-${tile.y}`} tile={tile} />)}
      <g fill="none" strokeLinejoin="round" strokeLinecap="round">
        <polyline points={ROUTE} stroke="#2276b8" strokeWidth="8" />
        <polyline points={ROUTE} stroke="#15aaf4" strokeWidth="5" />
      </g>
      {TOWNS.map(([x, y]) => <circle key={`${x}-${y}`} cx={x} cy={y} r="2" fill="#fff" stroke="#888" />)}
      {SHIELDS.map(([x, y, label, kind]) => <Shield key={`${x}-${y}`} x={x} y={y} label={label} kind={kind} />)}
      {[[55, 678], [235, 849]].map(([x, y]) => (
        <g key={x}>
          <circle cx={x} cy={y} r="5" fill="#fff" stroke="#7fa05a" />
          <circle cx={x} cy={y} r="2" fill="#57a51d" />
        </g>
      ))}
      <g fill="#484848" stroke="#f7f6f4" strokeWidth="2" paintOrder="stroke" strokeLinejoin="round">
        {PLACES.map(([x, y, text, size]) => <text key={`${x}-${y}`} x={x} y={y} fontSize={size} textAnchor="middle">{text}</text>)}
        {LEFT_PLACES.map(([x, y, text, size]) => <text key={y} x={x} y={y} fontSize={size}>{text}</text>)}
        <g fill="#4d7050" fontStyle="italic">
          {PARK_LABELS.map(([x, y, text, size, anchor]) => <text key={`${x}-${y}`} x={x} y={y} fontSize={size} textAnchor={anchor}>{text}</text>)}
        </g>
        <g fill="#111" fontSize="13" fontWeight="700" textAnchor="end">
          <text x="420" y="711">Оклахома-Сити,</text>
          <text x="420" y="724">Оклахома</text>
        </g>
      </g>
      <circle cx="428" cy="713" r="5" fill="#fff" stroke="#222" strokeWidth="2" />
      <circle cx="428" cy="713" r="2" fill="#222" />
      <path d="M429 710Q427 703 423 699A7 7 0 1 1 435 699Q431 703 429 710Z" fill="#ea5350" stroke="#a93431" strokeWidth=".7" />
      <circle cx="429" cy="695" r="2.2" fill="#611814" />
      <rect x="427" y="754" width="15" height="14" rx="4" fill="#c9cdd2" />
      <circle cx="434.5" cy="761" r="5.5" fill="#d9343c" />
      <rect x="431" y="760" width="7" height="2" fill="#fff" />
      <path d="M488 1035L496 1048H480Z" fill="#f2903c" stroke="#fbe0c4" strokeWidth="1.5" strokeLinejoin="round" />
      <path d="M488 1038V1043M488 1045V1047" stroke="#222" strokeWidth="2" />
      <rect x="306" y="1116" width="172" height="34" fill="#fff" stroke="#b5b5b5" />
      <text x="313" y="1132" fontSize="12" fontWeight="700" fill="#222">На автомобиле</text>
      <text x="410" y="1132" fontSize="12" fill="#555">3 ч. 6 мин.</text>
      <text x="313" y="1143" fontSize="10" fill="#777">205 мил</text>
    </MapCanvas>
  );
}

const FADE = [1, 1, 1, 0.85, 0.6, 0.4, 0.15, 0.04];

function CheckerPattern() {
  return (
    <Checker viewBox="0 0 84 48" preserveAspectRatio="none" aria-hidden="true">
      {FADE.flatMap((opacity, col) =>
        [0, 1, 2, 3, 4].map((row) =>
          (row + col) % 2 === 0 ? (
            <rect key={`${col}-${row}`} x={col * 10.5} y={row * 9.6} width="10.6" height="9.7" fill="#335680" opacity={opacity} />
          ) : (
            <rect key={`${col}-${row}`} x={col * 10.5} y={row * 9.6} width="10.6" height="9.7" fill="#a3a3a3" opacity={opacity} />
          )
        )
      )}
    </Checker>
  );
}

const CONTACTS = [
  ["Name:", "Elena"],
  ["E-mail:", "whithjuliatest@mail.ru"],
  ["Skype:", "fff"],
  ["Mobile:", "+7 9111161111"],
];

const FARES = [
  ["Price:", "$110", "escrow"],
  ["Tips:", "$10", "escrow"],
];

const STOPS = [
  ["From:", "toronto"],
  ["To:", "moscow"],
  ["Pick up:", "13 Aug 2015, 21:15"],
];

export default function App() {
  return (
    <Page>
      <GlobalStyle />
      <Header>
        <Logo href="#home">
          <ThumbIcon />
          <LogoText>
            <LogoTop>TAXI</LogoTop>
            <LogoBottom>my price</LogoBottom>
          </LogoText>
        </Logo>
        <CheckerPattern />
        <Nav>
          <NavLink href="#profit">Profit</NavLink>
          <NavLink href="#driver">Driver</NavLink>
          <NavLink href="#help" $last>Help</NavLink>
        </Nav>
        <Switch>
          <SwitchLink href="#book">BOOK</SwitchLink>
          <SwitchLink href="#store" $right>STORE</SwitchLink>
          <SwitchBadge viewBox="0 0 32 32" aria-hidden="true">
            <circle cx="16" cy="16" r="16" fill="#a3a3a3" />
            <g transform="translate(8 2) scale(.64)">
              <Hand fill="#2c66a6" line="#8fa3b8" />
            </g>
          </SwitchBadge>
        </Switch>
        <Account type="button">
          <AccountName>My account <Caret /></AccountName>
          <AccountRole>Independent driver</AccountRole>
        </Account>
        <HeaderTail />
      </Header>
      <Band />
      <Dialog role="dialog" aria-labelledby="trip-title">
        <DialogBar>
          <DialogTitle id="trip-title">toronto - moscow</DialogTitle>
          <CloseButton type="button" aria-label="Close">
            <svg width="18" height="18" viewBox="0 0 18 18" aria-hidden="true">
              <circle cx="9" cy="9" r="9" fill="#b9babc" />
              <path d="M5 5L13 13M13 5L5 13" stroke="#f2f2f2" strokeWidth="2" />
            </svg>
          </CloseButton>
        </DialogBar>
        <Columns>
          <div>
            <Section $after={25}>
              <SectionTitle>Passenger info</SectionTitle>
              <Quantity><InlineTerm>Quantity:</InlineTerm> Adults (2), children (1), seniors (0)</Quantity>
              <Note>I am making this booking on anofer's behalf.</Note>
              <Rows>
                {CONTACTS.map(([term, value]) => (
                  <Row key={term}><Term>{term}</Term><dd>{value}</dd></Row>
                ))}
              </Rows>
            </Section>
            <Section $after={13}>
              <SectionTitle>Fare</SectionTitle>
              <Rows $top={10}>
                {FARES.map(([term, value, payment]) => (
                  <Row key={term} $cols="89px 90px 1fr" $height={27}>
                    <Term>{term}</Term>
                    <dd>{value}</dd>
                    <dd><InlineTerm>Payment:</InlineTerm> {payment}</dd>
                  </Row>
                ))}
              </Rows>
            </Section>
            <Section>
              <SectionTitle>Route info</SectionTitle>
              <Rows $top={10}>
                {STOPS.map(([term, value]) => (
                  <Row key={term} $cols="184px 1fr" $height={26}><Term>{term}</Term><dd>{value}</dd></Row>
                ))}
              </Rows>
            </Section>
          </div>
          <Section>
            <SectionTitle>Vehicle</SectionTitle>
            <Rows $top={9}>
              <Row>
                <Term>Class:</Term>
                <Capacity>
                  Economy
                  <CapacityItem $first><PersonIcon />5</CapacityItem>
                  <CapacityItem><CaseIcon />5</CapacityItem>
                  <CapacityItem><DoorIcon />5</CapacityItem>
                </Capacity>
              </Row>
            </Rows>
            <Pill $top={17} $bottom={16}>For kids, pets and baggage</Pill>
            <Rows>
              <Row><Term>child seat</Term><dd>1 (1-3 years)</dd></Row>
            </Rows>
            <Pill $top={21} $bottom={20}>Additional services</Pill>
            <Hint>All this items are optional. You should ask driver about the price.</Hint>
            <Pill $top={35}>Additional driver`s services</Pill>
          </Section>
        </Columns>
        <Stats>
          <Stat><TimerIcon />0.0 mins</Stat>
          <Stat><SignIcon />0.0 km / 0.0 mi</Stat>
          <Stat $end><CalcIcon />$110</Stat>
        </Stats>
        <MapFrame><RouteMap /></MapFrame>
      </Dialog>
    </Page>
  );
}
